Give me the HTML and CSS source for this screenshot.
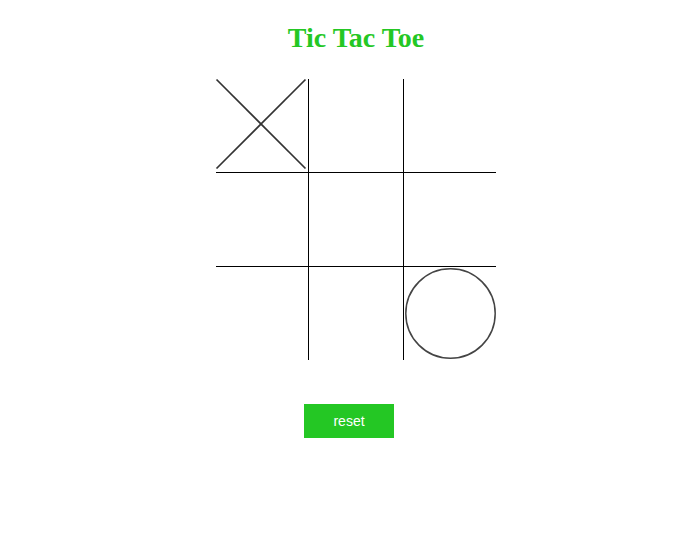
FILE: index.html
```html
<!DOCTYPE html>
<html>
<head>
<meta charset="utf-8">
<title>Tic Tac Toe</title>
<link rel="stylesheet" href="styles.css">
</head>
<body>
<div class="page">
  <h1 class="title">Tic Tac Toe</h1>
  <div class="board">
    <div class="cell">
      <svg class="mark" width="90" height="90" viewBox="0 0 90 90"><line x1="0.5" y1="0.5" x2="89.5" y2="89.5"/><line x1="89.5" y1="0.5" x2="0.5" y2="89.5"/></svg>
    </div>
    <div class="cell col-mid"></div>
    <div class="cell"></div>
    <div class="cell row-mid"></div>
    <div class="cell row-mid col-mid"></div>
    <div class="cell row-mid"></div>
    <div class="cell"></div>
    <div class="cell col-mid"></div>
    <div class="cell">
      <svg class="mark o" width="92" height="92" viewBox="0 0 92 92"><circle cx="46.5" cy="46.5" r="44.7"/></svg>
    </div>
  </div>
  <button class="reset">reset</button>
</div>
</body>
</html>
```
FILE: styles.css
```css
html, body {
  margin: 0;
  padding: 0;
  background: #ffffff;
}

.page {
  width: 280px;
  padding: 22px 0 0 216px;
  display: flex;
  flex-direction: column;
  align-items: flex-start;
}

.title {
  margin: 0;
  width: 100%;
  text-align: center;
  font-family: "Liberation Serif", "Times New Roman", serif;
  font-weight: bold;
  font-size: 28px;
  line-height: 32px;
  color: #24c724;
}

.board {
  margin-top: 25px;
  display: grid;
  grid-template-columns: 92px 96px 92px;
  grid-template-rows: 93px 95px 93px;
}

.cell {
  box-sizing: border-box;
  position: relative;
}

.col-mid {
  border-left: 1px solid #000;
  border-right: 1px solid #000;
}

.row-mid {
  border-top: 1px solid #000;
  border-bottom: 1px solid #000;
}

.mark {
  display: block;
  overflow: visible;
  fill: none;
  stroke: #333;
  stroke-width: 1.7;
}

.mark.o {
  stroke-width: 1.5;
  stroke: #444;
}

.reset {
  margin: 44px 0 0 88px;
  width: 90px;
  height: 34px;
  border: none;
  padding: 0;
  background: #24c724;
  color: #ffffff;
  font-family: "Liberation Sans", Arial, sans-serif;
  font-size: 14px;
  cursor: pointer;
}
```
